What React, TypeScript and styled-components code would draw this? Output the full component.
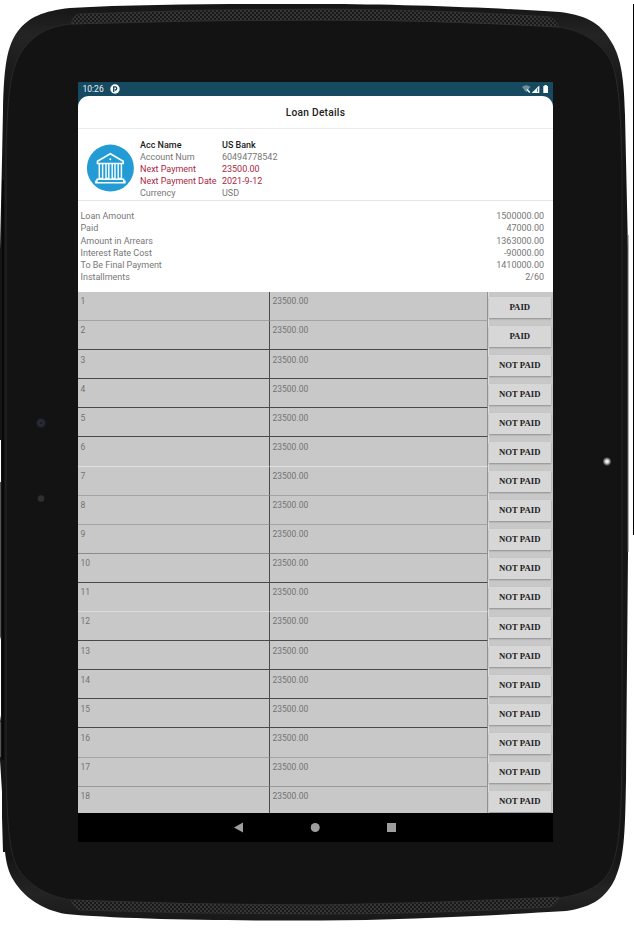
import React from "react";
import styled, { createGlobalStyle } from "styled-components";

const GlobalStyle = createGlobalStyle`
  * { box-sizing: border-box; }
  html, body { margin: 0; background: #fff; overflow: hidden; }
`;

const Stage = styled.main`
  position: relative;
  width: 634px;
  height: 928px;
  padding: 82px 81px 86px 78px;
  overflow: hidden;
  font-family: Roboto, "Liberation Sans", sans-serif;
`;

const Shell = styled.svg`
  position: absolute;
  inset: 0;
  z-index: 0;
`;

const Screen = styled.section`
  position: relative;
  z-index: 1;
  width: 475px;
  height: 760px;
  display: flex;
  flex-direction: column;
  background: #164a60;
  overflow: hidden;
`;

const StatusBar = styled.header`
  flex: 0 0 14px;
  display: flex;
  align-items: center;
  padding: 0 4px 0 4.5px;
  color: #e9f2f5;
  font-size: 8.5px;
  line-height: 14px;
`;

const Clock = styled.span`
  width: 27px;
  white-space: nowrap;
`;

const StatusIcons = styled.svg`
  margin-left: auto;
`;

const Sheet = styled.div`
  flex: 1;
  min-height: 0;
  display: flex;
  flex-direction: column;
  background: #fff;
  border-radius: 11px 11px 0 0;
  overflow: hidden;
`;

const Title = styled.h1`
  flex: none;
  height: 33px;
  margin: 0;
  border-bottom: 1px solid #ebebeb;
  color: #212121;
  font-size: 10.2px;
  line-height: 33px;
  font-weight: 500;
  letter-spacing: 0.24px;
  text-align: center;
`;

const Account = styled.div`
  flex: none;
  height: 72px;
  display: flex;
  border-bottom: 1px solid #e6e6e6;
  padding: 9.5px 0 0 8px;
`;

const BankIcon = styled.svg`
  flex: none;
  margin: 5px 6px 0 0;
`;

const Facts = styled.dl`
  display: grid;
  grid-template-columns: 82px 120px;
  grid-auto-rows: 12.1px;
  margin: 0;
`;

const tones = { plain: "#777", strong: "#1c1c1c", alert: "#ab2742" };
type Tone = keyof typeof tones;

const Fact = styled.dt<{ $tone: Tone }>`
  margin: 0;
  color: ${(p) => tones[p.$tone]};
  font-size: 9px;
  line-height: 12.1px;
  font-weight: ${(p) => (p.$tone === "strong" ? 500 : 400)};
  letter-spacing: ${(p) => (p.$tone === "strong" ? "0" : "-0.02px")};
  white-space: nowrap;
`;

const Summary = styled.div`
  flex: none;
  height: 91px;
  padding: 9.3px 9px 0 2.5px;
`;

const SummaryRow = styled.div`
  display: flex;
  justify-content: space-between;
  height: 12.2px;
  color: #777;
  font-size: 9px;
  line-height: 12.2px;
  letter-spacing: -0.02px;
`;

const Installments = styled.div`
  flex: 1;
  min-height: 0;
  overflow: hidden;
  background: #c8c8c8;
`;

const InstallmentRow = styled.div`
  display: grid;
  grid-template-columns: 192px 218px 65px;
  height: 29.1px;
`;

const Cell = styled.div<{ $line: string; $last?: boolean }>`
  border-right: 1px solid ${(p) => (p.$last ? "#929292" : "#4b4b4b")};
  border-bottom: 1px solid ${(p) => p.$line};
  padding: 3.4px 0 0 2.5px;
  color: #737373;
  font-size: 8.5px;
  line-height: 12px;
`;

const ButtonCell = styled.div`
  border-left: 1px solid #dedede;
  padding: 4.5px 0 0;
`;

const PayButton = styled.button`
  display: block;
  width: 61.5px;
  height: 21px;
  border: 0;
  padding: 0;
  background: #d7d7d7;
  box-shadow: 0 1px 1.5px #8f8f8f;
  color: #202020;
  font: bold 8.7px/21px "Liberation Serif", serif;
  text-align: center;
`;

const NavBar = styled.nav`
  flex: 0 0 29px;
  display: flex;
  justify-content: center;
  background: #000;
`;

function TabletShell() {
  return (
    <Shell width="634" height="928" viewBox="0 0 634 928" aria-hidden="true">
      <defs>
        <pattern id="grille" width="4" height="4" patternUnits="userSpaceOnUse">
          <rect width="4" height="4" fill="#363636" />
          <circle cx="1" cy="1" r="1" fill="#0d0d0d" />
          <circle cx="3" cy="3" r="1" fill="#0d0d0d" />
        </pattern>
        <radialGradient id="led">
          <stop offset="0" stopColor="#fff" />
          <stop offset="0.3" stopColor="#dedede" />
          <stop offset="0.9" stopColor="#131313" />
        </radialGradient>
        <linearGradient id="rim" x1="0" y1="0" x2="0" y2="1">
          <stop offset="0" stopColor="#151515" />
          <stop offset="0.035" stopColor="#242424" />
          <stop offset="0.1" stopColor="#151515" />
          <stop offset="0.93" stopColor="#151515" />
          <stop offset="0.97" stopColor="#242424" />
          <stop offset="1" stopColor="#181818" />
        </linearGradient>
      </defs>
      <path d="M633.5 4V535" stroke="#000" />
      <path
        d="M3 110C4 65 7 46 18 31C29 17 43 11 70 8C140 4 230 4 320 4C400 4 500 8 560 12C590 16 602 25 612 43C621 58 624 78 625 115L628 250V552L626 780C625 838 624 858 615 879C606 897 594 907 566 911C500 915 400 920 320 920.5C220 921 120 919 66 914C42 910 24 897 14 881C8 872 6 861 5 852H3L2 817V792L0 760V722L1 715V640L0 635V482H1V440H0V250L2 160Z"
        fill="url(#rim)"
      />
      <path
        d="M6 150C8 91 10 66 25 47C38 31 53 26 71 24C160 21 240 20 320 20C410 20 490 23 558 27C583 30 602 44 611 61C619 79 621 115 622 170V740C622 835 618 866 602 881C591 891 577 895 560 898C480 903 400 904 320 905C230 905 135 903 71 900C44 896 26 882 17 867C9 851 7 820 6 770Z"
        fill="#131313"
        stroke="#292929"
      />
      <path d="M71 24Q73 15 80 14Q200 9 320 9Q450 10 550 17Q555 19 559 27Q440 20 320 20Q195 20 71 24Z" fill="url(#grille)" stroke="#333" strokeWidth=".7" />
      <path d="M71 900Q195 905 320 905Q440 903 559 897Q556 905 550 907Q430 914 320 914Q200 914 79 910Q74 908 71 900Z" fill="url(#grille)" stroke="#333" strokeWidth=".7" />
      <path d="M3 180V760" stroke="#080808" strokeWidth="2" />
      <path d="M628 235V552" stroke="#666" />
      <path d="M.5 482V636M.5 722V757" stroke="#555" />
      <circle cx="41" cy="423" r="4.5" fill="#252630" />
      <circle cx="41" cy="423" r="2" fill="#171b2a" stroke="#303347" strokeWidth=".8" />
      <circle cx="41" cy="498.5" r="3.3" fill="#303030" />
      <circle cx="607" cy="461.5" r="5" fill="url(#led)" />
    </Shell>
  );
}

function BankLogo() {
  return (
    <BankIcon width="48" height="48" viewBox="0 0 48 48">
      <circle cx="24.4" cy="24.1" r="23.5" fill="#239bd5" />
      <g fill="none" stroke="#f5ffff" strokeWidth="1.7">
        <path d="M11.5 19.5V17.3L24.3 9.8L37.2 17.3V19.5Z" />
        <path d="M13.3 20V34.5H16.6V20M20 20V34.5H22.8V20M26.2 20V34.5H29V20M32.2 20V34.5H35.4V20" strokeWidth="1.5" />
        <path d="M11 35.2H37.7V37.2H39V38.8H9.8V37.2H11Z" strokeWidth="1.4" />
      </g>
      <circle cx="24.3" cy="15.2" r="1" fill="#f5ffff" />
    </BankIcon>
  );
}

const facts: [string, string, Tone][] = [
  ["Acc Name", "US Bank", "strong"],
  ["Account Num", "60494778542", "plain"],
  ["Next Payment", "23500.00", "alert"],
  ["Next Payment Date", "2021-9-12", "alert"],
  ["Currency", "USD", "plain"],
];

const totals = [
  ["Loan Amount", "1500000.00"],
  ["Paid", "47000.00"],
  ["Amount in Arrears", "1363000.00"],
  ["Interest Rate Cost", "-90000.00"],
  ["To Be Final Payment", "1410000.00"],
  ["Installments", "2/60"],
];

const D = "#484848";
const G = "#a3a3a3";
const lines = [G, D, D, D, D, "#e1e1e1", G, G, "#8c8c8c", D, "#dddddd", D, D, D, D, G, "#989898", G];

export default function App() {
  return (
    <Stage>
      <GlobalStyle />
      <TabletShell />
      <Screen>
        <StatusBar>
          <Clock>10:26</Clock>
          <svg width="10" height="10" viewBox="0 0 10 10">
            <circle cx="5" cy="5" r="4.7" fill="#fff" />
            <path d="M3.7 8V2.9H5.5A1.6 1.6 0 0 1 5.5 6H4.8" fill="none" stroke="#164a60" strokeWidth="1.3" />
          </svg>
          <StatusIcons width="28" height="10" viewBox="0 0 28 10">
            <path d="M1 3Q5.2-.4 9.5 3L5.2 8.2Z" fill="#718f9d" />
            <path d="M6 5.5L8.8 8.5" stroke="#fff" strokeWidth="1.4" />
            <path d="M10.7 9L18.3 1.5V9Z" fill="#fff" />
            <path d="M16.5 4.5V8" stroke="#164a60" strokeWidth=".7" />
            <path d="M22.3 2H23.5V1H25.8V2H27V9H22.3Z" fill="#fff" />
          </StatusIcons>
        </StatusBar>
        <Sheet>
          <Title>Loan Details</Title>
          <Account>
            <BankLogo />
            <Facts>
              {facts.map(([label, value, tone]) => (
                <React.Fragment key={label}>
                  <Fact $tone={tone}>{label}</Fact>
                  <Fact as="dd" $tone={tone}>{value}</Fact>
                </React.Fragment>
              ))}
            </Facts>
          </Account>
          <Summary>
            {totals.map(([label, value]) => (
              <SummaryRow key={label}><span>{label}</span><span>{value}</span></SummaryRow>
            ))}
          </Summary>
          <Installments>
            {lines.map((line, i) => (
              <InstallmentRow key={i}>
                <Cell $line={line}>{i + 1}</Cell>
                <Cell $line={line} $last>23500.00</Cell>
                <ButtonCell><PayButton>{i < 2 ? "PAID" : "NOT PAID"}</PayButton></ButtonCell>
              </InstallmentRow>
            ))}
          </Installments>
        </Sheet>
        <NavBar>
          <svg width="170" height="29" viewBox="0 0 170 29" fill="#9e9e9e">
            <path d="M3 14.5L12 9.5V19.5Z" />
            <circle cx="84.2" cy="14.5" r="4.5" />
            <rect x="156" y="10" width="9" height="9" />
          </svg>
        </NavBar>
      </Screen>
    </Stage>
  );
}
